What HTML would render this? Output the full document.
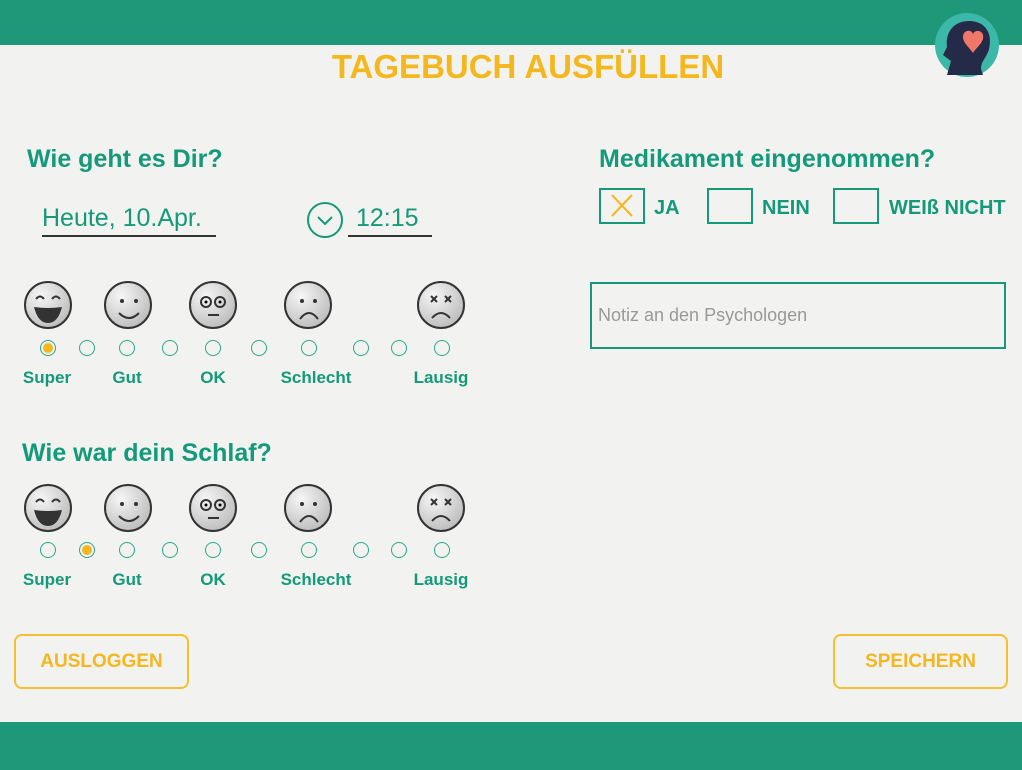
<!DOCTYPE html>
<html><head><meta charset="utf-8"><style>
*{margin:0;padding:0;box-sizing:border-box}
body{width:1022px;height:770px;background:#f2f2f0;position:relative;overflow:hidden;font-family:"Liberation Sans",sans-serif}
.bar{position:absolute;left:0;width:1022px;background:#1e9878}
.t{position:absolute;color:#149a7a;font-weight:bold;white-space:nowrap}
.r{position:absolute;width:16px;height:16px;border:1.5px solid #2aa88a;border-radius:50%}
.r.on::after{content:"";position:absolute;left:2px;top:2px;width:10px;height:10px;border-radius:50%;background:#f4b81e}
.btn{position:absolute;border:2px solid #f4c030;border-radius:8px;color:#f4b81e;font-weight:bold;font-size:19px;display:flex;align-items:center;justify-content:center}
.cb{position:absolute;width:46px;height:36px;border:2.5px solid #149a7a}
</style></head><body>
<div class="bar" style="top:0;height:45px"></div>
<div class="bar" style="top:722px;height:48px"></div>
<svg style="position:absolute;left:933px;top:13px" width="68" height="68" viewBox="0 0 68 68">
<circle cx="34" cy="32" r="32" fill="#3bb8a8"/>
<path d="M14 62 L18 48 L10 42 L14 34 C12 18 22 8 36 8 C52 8 60 20 56 36 C54 44 48 48 48 56 L50 62 Z" fill="#252a48"/>
<path d="M30 24 C30 16 40 16 40 22 C40 16 52 16 50 26 C48 32 42 36 40 40 C36 34 30 30 30 24Z" fill="#f07868"/>
<text x="34" y="74" font-size="6" fill="#3bb8a8" text-anchor="middle">E-Mood Tracker</text>
</svg>
<div style="position:absolute;left:0;width:1056px;top:48px;text-align:center;color:#f4b81e;font-weight:bold;font-size:33px">TAGEBUCH AUSFÜLLEN</div>
<div class="t" style="left:27px;top:145px;font-size:25px">Wie geht es Dir?</div>
<div style="position:absolute;left:42px;top:204px;width:174px;border-bottom:2px solid #333;font-size:25px;color:#149a7a;padding-bottom:2px">Heute, 10.Apr.</div>
<svg style="position:absolute;left:306px;top:201px" width="38" height="38"><circle cx="19" cy="19" r="17" fill="none" stroke="#149a7a" stroke-width="2"/><path d="M12 16 L19 23 L26 16" fill="none" stroke="#149a7a" stroke-width="2"/></svg>
<div style="position:absolute;left:348px;top:204px;width:84px;border-bottom:2px solid #333;font-size:25px;color:#149a7a;padding-left:8px;padding-bottom:2px">12:15</div>
<div class="t" style="left:22px;top:439px;font-size:25px">Wie war dein Schlaf?</div>
<div class="t" style="left:599px;top:145px;font-size:25px">Medikament eingenommen?</div>
<div class="cb" style="left:599px;top:188px"><svg width="41" height="31"><path d="M11 5 L31 26 M31 5 L11 26" stroke="#f4b81e" stroke-width="2"/></svg></div>
<div class="t" style="left:654px;top:197px;font-size:20px">JA</div>
<div class="cb" style="left:707px;top:188px"></div>
<div class="t" style="left:762px;top:197px;font-size:20px">NEIN</div>
<div class="cb" style="left:833px;top:188px"></div>
<div class="t" style="left:889px;top:197px;font-size:20px">WEIß NICHT</div>
<div style="position:absolute;left:590px;top:282px;width:416px;height:67px;border:2px solid #149a7a;color:#999;font-size:18px;padding:21px 6px">Notiz an den Psychologen</div>
<div id="g1"></div>
<div class="btn" style="left:14px;top:634px;width:175px;height:55px">AUSLOGGEN</div>
<div class="btn" style="left:833px;top:634px;width:175px;height:55px">SPEICHERN</div>
<script>
var fx=[48,128,213,308,441],rx=[48,87,127,170,213,259,309,361,399,442],lab=[["Super",47],["Gut",127],["OK",213],["Schlecht",316],["Lausig",441]];
var faces=['<path d="M-12 -6 q4 -5 8 0 M4 -6 q4 -5 8 0" stroke="#333" stroke-width="2" fill="none"/><path d="M-14 2 Q0 4 14 2 Q10 18 0 18 Q-10 18 -14 2Z" fill="#333"/>',
'<circle cx="-6" cy="-4" r="2" fill="#333"/><circle cx="8" cy="-4" r="2" fill="#333"/><path d="M-9 8 Q1 18 11 8" stroke="#333" stroke-width="2" fill="none"/>',
'<circle cx="-7" cy="-3" r="5" stroke="#333" stroke-width="2" fill="none"/><circle cx="7" cy="-3" r="5" stroke="#333" stroke-width="2" fill="none"/><circle cx="-7" cy="-3" r="1.5"/><circle cx="7" cy="-3" r="1.5"/><path d="M-5 10 H6" stroke="#333" stroke-width="2"/>',
'<circle cx="-6" cy="-4" r="2" fill="#333"/><circle cx="7" cy="-4" r="2" fill="#333"/><path d="M-8 14 Q1 2 10 14" stroke="#333" stroke-width="2" fill="none"/>',
'<path d="M-10 -9 l6 6 M-4 -9 l-6 6 M4 -9 l6 6 M10 -9 l-6 6" stroke="#333" stroke-width="2"/><path d="M-9 13 Q0 3 9 13" stroke="#333" stroke-width="2" fill="none"/>'];
var h='';
[[305,348,378,0],[508,550,580,1]].forEach(function(s){
fx.forEach(function(x,i){h+='<svg style="position:absolute;left:'+(x-26)+'px;top:'+(s[0]-26)+'px" width="52" height="52" viewBox="-26 -26 52 52"><defs><radialGradient id="g" cx="0.35" cy="0.3" r="0.8"><stop offset="0" stop-color="#f6f6f6"/><stop offset="1" stop-color="#b8b8b8"/></radialGradient></defs><circle r="23" fill="url(#g)" stroke="#333" stroke-width="2"/>'+faces[i]+'</svg>';});
rx.forEach(function(x,i){h+='<div class="r'+(i==s[3]?' on':'')+'" style="left:'+(x-8)+'px;top:'+(s[1]-8)+'px"></div>';});
lab.forEach(function(l){h+='<div class="t" style="font-size:17px;top:'+(s[2]-10)+'px;left:'+(l[1]-60)+'px;width:120px;text-align:center">'+l[0]+'</div>';});
});
document.getElementById('g1').innerHTML=h;
</script>
</body></html>
